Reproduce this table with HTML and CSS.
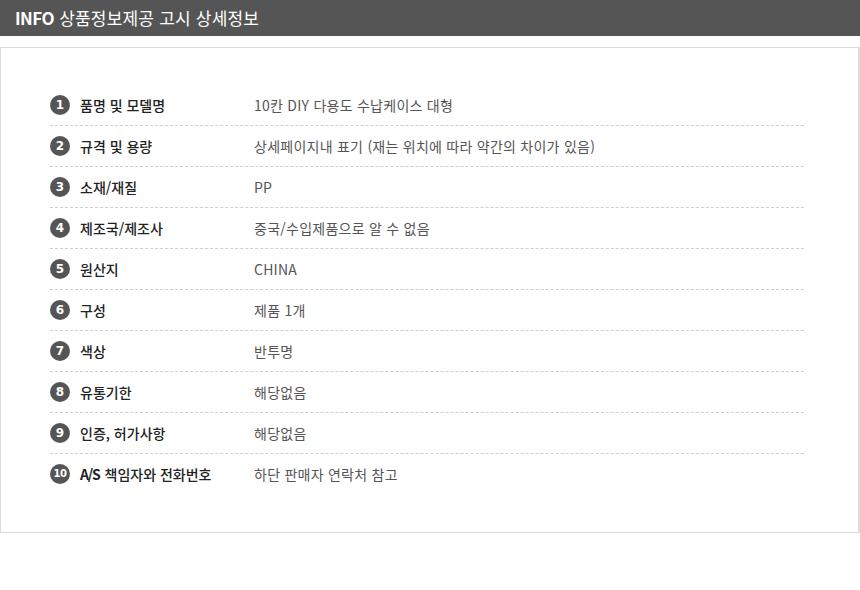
FILE: index.html
```html
<!DOCTYPE html>
<html lang="ko">
<head>
<meta charset="utf-8">
<link rel="stylesheet" href="styles.css">
</head>
<body>
<div class="head"><b>INFO</b> 상품정보제공 고시 상세정보</div>
<div class="box">
  <ul class="list">
    <li class="row"><span class="num">1</span><span class="label">품명 및 모델명</span><span class="value">10칸 DIY 다용도 수납케이스 대형</span></li>
    <li class="row"><span class="num">2</span><span class="label">규격 및 용량</span><span class="value">상세페이지내 표기 (재는 위치에 따라 약간의 차이가 있음)</span></li>
    <li class="row"><span class="num">3</span><span class="label">소재/재질</span><span class="value">PP</span></li>
    <li class="row"><span class="num">4</span><span class="label">제조국/제조사</span><span class="value">중국/수입제품으로 알 수 없음</span></li>
    <li class="row"><span class="num">5</span><span class="label">원산지</span><span class="value">CHINA</span></li>
    <li class="row"><span class="num">6</span><span class="label">구성</span><span class="value">제품 1개</span></li>
    <li class="row"><span class="num">7</span><span class="label">색상</span><span class="value">반투명</span></li>
    <li class="row"><span class="num">8</span><span class="label">유통기한</span><span class="value">해당없음</span></li>
    <li class="row"><span class="num">9</span><span class="label">인증, 허가사항</span><span class="value">해당없음</span></li>
    <li class="row"><span class="num ten">10</span><span class="label"><b class="as">A/S</b> 책임자와 전화번호</span><span class="value">하단 판매자 연락처 참고</span></li>
  </ul>
</div>
</body>
</html>
```
FILE: styles.css
```css
* { box-sizing: border-box; }
html, body { margin: 0; padding: 0; background: #fff; }
body {
  width: 860px;
  font-family: "Noto Sans CJK KR", "Noto Sans", sans-serif;
  color: #333;
}
.head {
  height: 36px;
  background: #555555;
  color: #fff;
  font-size: 17px;
  line-height: 36px;
  padding-left: 15px;
  letter-spacing: 0.2px;
}
.head b { font-weight: 700; letter-spacing: -0.5px; }
.box {
  margin-top: 11px;
  width: 860px;
  border: 1px solid #dcdcdc;
  border-right-width: 2px;
  padding: 37px 54px 38px 49px;
}
.list { list-style: none; margin: 0; padding: 0; }
.row {
  display: flex;
  align-items: center;
  height: 41px;
  border-bottom: 1px dashed #cfcfcf;
}
.row:last-child { border-bottom: none; height: 40px; }
.num {
  flex: none;
  width: 20px;
  height: 20px;
  border-radius: 50%;
  background: #555;
  color: #fff;
  font-family: "DejaVu Sans", sans-serif;
  font-weight: 700;
  font-size: 12px;
  line-height: 20px;
  text-align: center;
}
.num.ten { font-size: 10px; letter-spacing: -0.5px; }
.label {
  flex: none;
  width: 174px;
  margin-left: 10px;
  font-size: 14px;
  font-weight: 500;
  color: #222;
  letter-spacing: 0;
}
.as { font-weight: 700; letter-spacing: -1.2px; margin-right: 1px; }
.value {
  font-size: 14px;
  color: #555;
  letter-spacing: 0.25px;
}
```
